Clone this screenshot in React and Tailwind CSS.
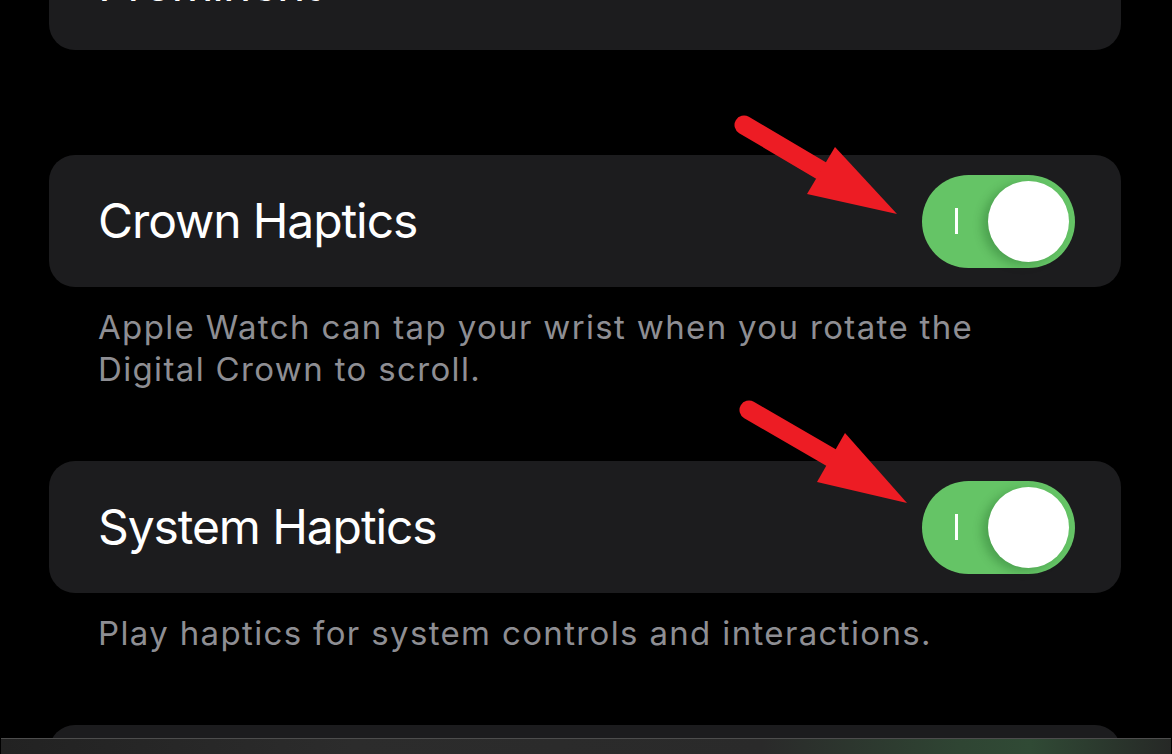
import React from 'react'

// Settings row with a label and optional switch
function Row({ title, on, className = '' }) {
  return (
    <div className={`flex h-[132px] items-center justify-between rounded-[26px] bg-[#1c1c1e] pl-[49px] pr-[46px] ${className}`}>
      <span className="text-[48px] tracking-[-1.1px] text-white">{title}</span>
      {on && <Switch />}
    </div>
  )
}

function Switch() {
  return (
    <div className="flex h-[93px] w-[153px] items-center justify-between rounded-full bg-[#65c466] pl-[33px] pr-[6px]">
      <span className="h-[26px] w-[3px] bg-white" />
      <span className="h-[81px] w-[81px] rounded-full bg-white shadow-[-6px_3px_10px_rgba(0,60,10,0.25)]" />
    </div>
  )
}

function Note({ children }) {
  return (
    <p className="mt-[19px] px-[49px] text-[33px] leading-[42px] tracking-[1.35px] text-[#8e8e93]">{children}</p>
  )
}

function Arrow({ tail, head }) {
  const [a, b, tip] = head
  const base = [(a[0] + b[0]) / 2, (a[1] + b[1]) / 2]
  return (
    <g>
      <line x1={tail[0]} y1={tail[1]} x2={base[0]} y2={base[1]} stroke="#ed1c24" strokeWidth="19" strokeLinecap="round" />
      <polygon points={`${a.join(',')} ${b.join(',')} ${tip.join(',')}`} fill="#ed1c24" />
    </g>
  )
}

export default function App() {
  return (
    <div className="relative h-[754px] w-[1172px] overflow-hidden bg-black font-['Inter',sans-serif]">
      <div className="-mt-[82px] flex flex-col pl-[49px] pr-[51px]">
        <Row title="Prominent" />
        <Row title="Crown Haptics" on className="mt-[105px]" />
        <Note>
          Apple Watch can tap your wrist when you rotate the
          <br />
          Digital Crown to scroll.
        </Note>
        <Row title="System Haptics" on className="mt-[71px]" />
        <Note>Play haptics for system controls and interactions.</Note>
        <Row title="" className="mt-[71px]" />
      </div>

      <svg className="pointer-events-none absolute inset-0" width="1172" height="754">
        <Arrow tail={[744, 125]} head={[[835, 147], [807, 194], [897, 214]]} />
        <Arrow tail={[749, 410]} head={[[845, 433], [817, 482], [907, 503]]} />
      </svg>

      <div className="absolute bottom-0 left-[1px] right-[1px] h-[16px] border-t border-[#4d4d4d] bg-[linear-gradient(90deg,#222_0%,#2c2c2c_30%,#2a2a2a_65%,#2f4533_82%,#304a35_88%,#262826_100%)]" />
    </div>
  )
}
